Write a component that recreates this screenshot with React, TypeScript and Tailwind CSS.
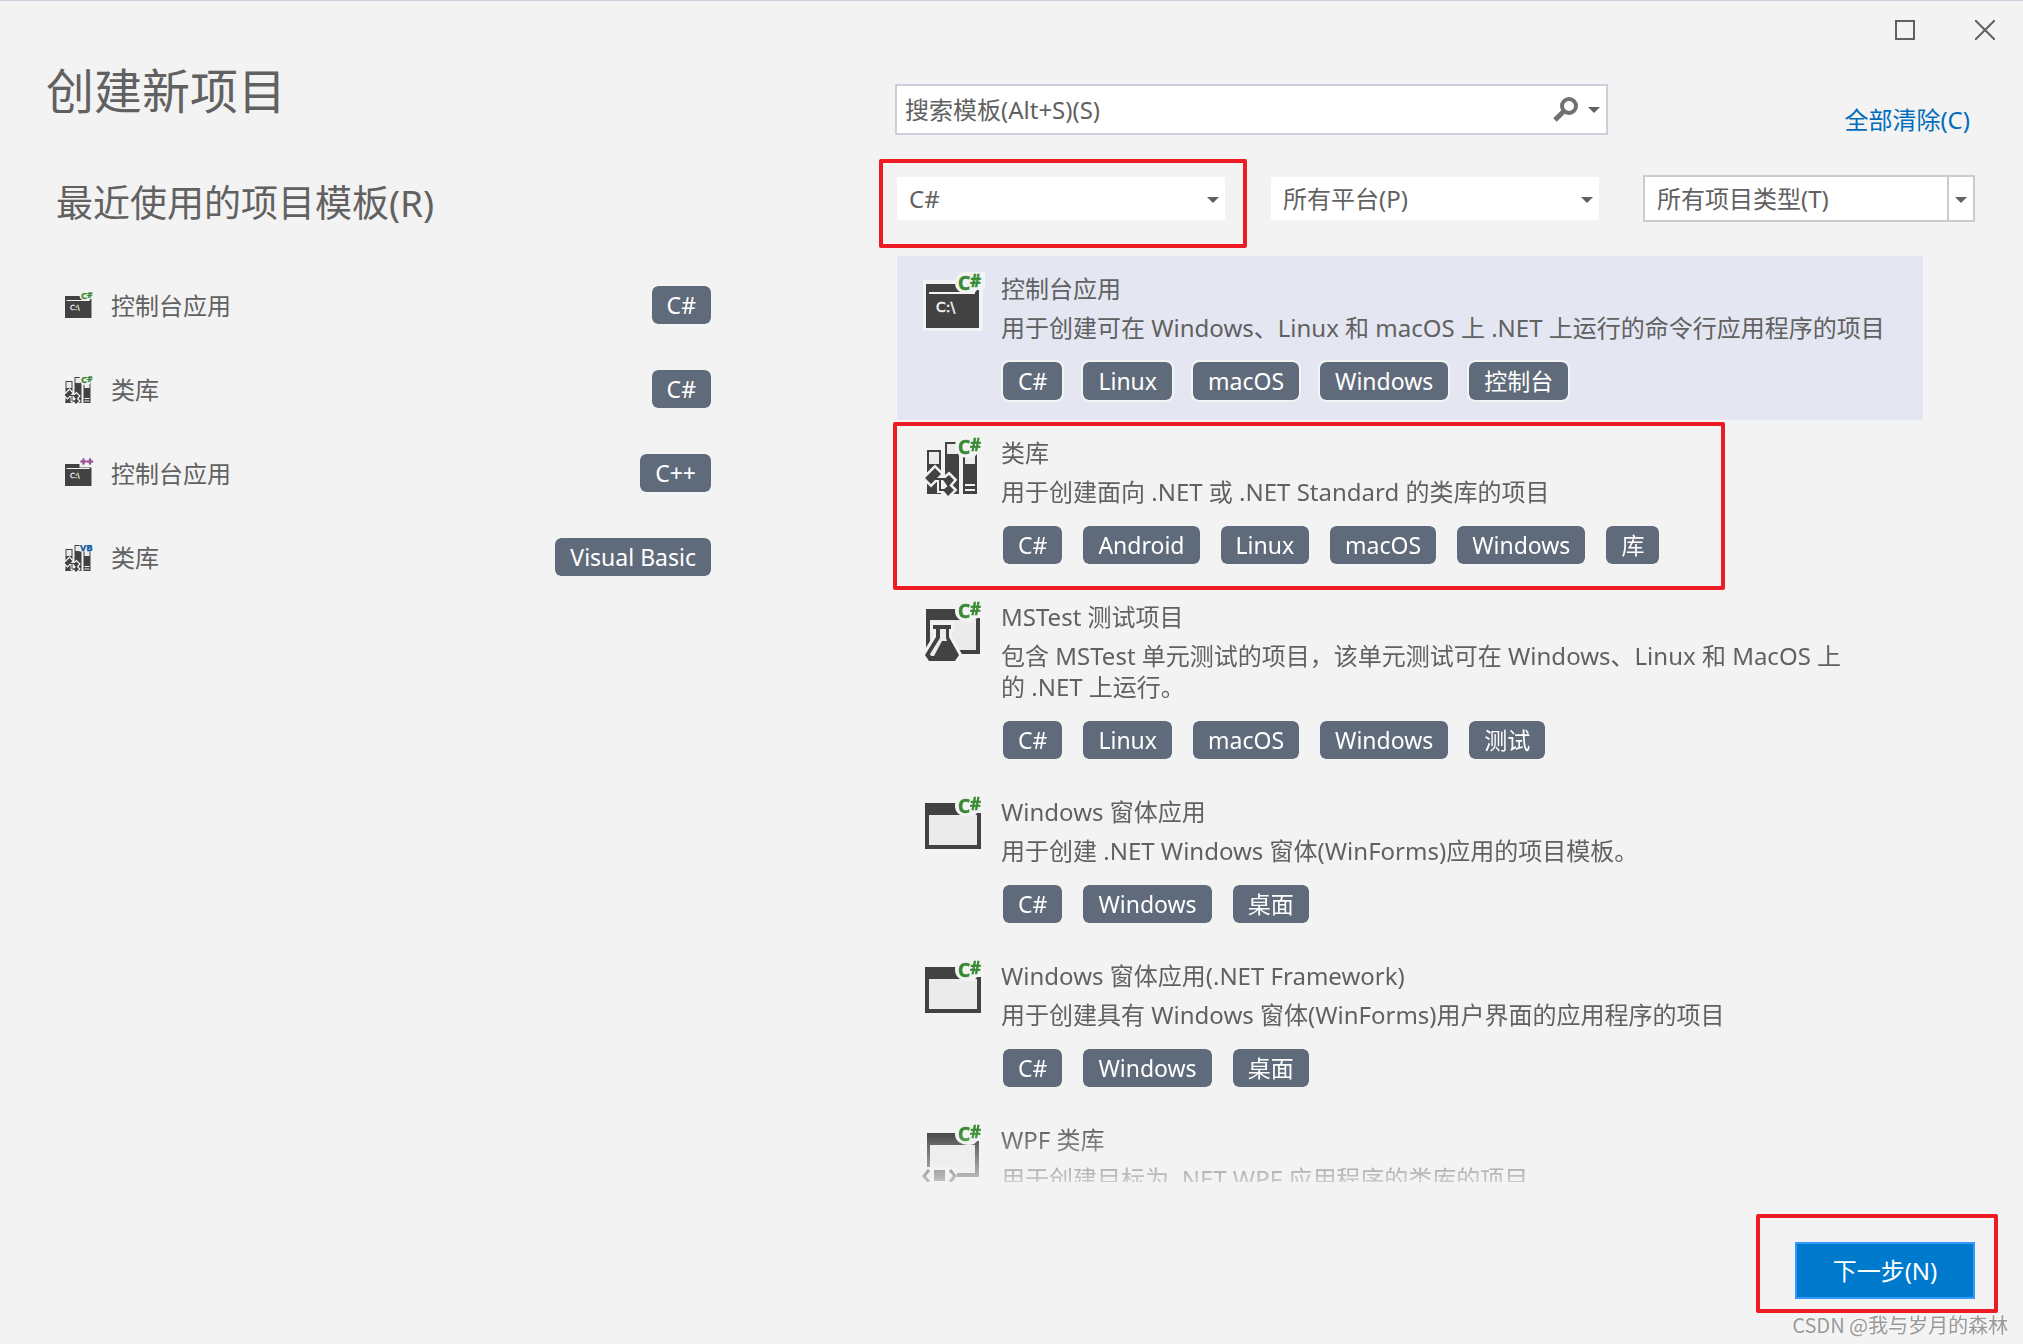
import React, { ReactNode } from "react";
import clsx from "clsx";

type Lang = "C#" | "++" | "VB";

type IconName = "console" | "library" | "test" | "window" | "wpf";

type Template = {
  icon: IconName;
  title: string;
  description: string;
  tags: string[];
  selected?: boolean;
  marked?: boolean;
};

const recentTemplates: { icon: IconName; lang: Lang; title: string; tag: string }[] = [
  { icon: "console", lang: "C#", title: "控制台应用", tag: "C#" },
  { icon: "library", lang: "C#", title: "类库", tag: "C#" },
  { icon: "console", lang: "++", title: "控制台应用", tag: "C++" },
  { icon: "library", lang: "VB", title: "类库", tag: "Visual Basic" },
];

const templates: Template[] = [
  {
    icon: "console",
    title: "控制台应用",
    description: "用于创建可在 Windows、Linux 和 macOS 上 .NET 上运行的命令行应用程序的项目",
    tags: ["C#", "Linux", "macOS", "Windows", "控制台"],
    selected: true,
  },
  {
    icon: "library",
    title: "类库",
    description: "用于创建面向 .NET 或 .NET Standard 的类库的项目",
    tags: ["C#", "Android", "Linux", "macOS", "Windows", "库"],
    marked: true,
  },
  {
    icon: "test",
    title: "MSTest 测试项目",
    description:
      "包含 MSTest 单元测试的项目，该单元测试可在 Windows、Linux 和 MacOS 上\n的 .NET 上运行。",
    tags: ["C#", "Linux", "macOS", "Windows", "测试"],
  },
  {
    icon: "window",
    title: "Windows 窗体应用",
    description: "用于创建 .NET Windows 窗体(WinForms)应用的项目模板。",
    tags: ["C#", "Windows", "桌面"],
  },
  {
    icon: "window",
    title: "Windows 窗体应用(.NET Framework)",
    description: "用于创建具有 Windows 窗体(WinForms)用户界面的应用程序的项目",
    tags: ["C#", "Windows", "桌面"],
  },
  {
    icon: "wpf",
    title: "WPF 类库",
    description: "用于创建目标为 .NET WPF 应用程序的类库的项目",
    tags: [],
  },
];

const shapes: Record<IconName, ReactNode> = {
  console: (
    <>
      <rect x="3" y="10" width="60" height="51" fill="#f3f3f3" />
      <rect x="6" y="14" width="53" height="44" fill="#424242" />
      <rect x="9" y="22" width="46" height="2" fill="#f3f3f3" />
      <text
        x="16"
        y="42"
        fontSize="14"
        fill="#f3f3f3"
        stroke="#f3f3f3"
        strokeWidth="0.5"
        className="font-['DejaVu_Sans',sans-serif]"
      >
        C:\
      </text>
    </>
  ),
  library: (
    <>
      <path d="M7 16h14v44H7zM25 8h14v52H25zM43 16h14v44H43z" fill="#424242" />
      <path d="M9 18h10v12H9zM27 10h10v10H27zM45 18h10v12H45z" fill="#ebebeb" />
      <path d="M45 50h10v2H45zM45 55h10v2H45z" fill="#f3f3f3" />
      <path
        d="M5 44 15 34l6 6-10 10zM23 46l6-5 5 5-6 7zM23 56l6-5 5 5-6 6z"
        fill="#f3f3f3"
        stroke="#f3f3f3"
        strokeWidth="5"
      />
      <path d="M15 45h10M20 45v11h5" fill="none" stroke="#f3f3f3" strokeWidth="6" />
      <path d="M7 56l4 1 4-1v4H7z" fill="#424242" />
      <path d="M15 45h10M20 45v11h5" fill="none" stroke="#424242" strokeWidth="2" />
      <path d="M5 44 15 34l6 6-10 10zM23 46l6-5 5 5-6 7zM23 56l6-5 5 5-6 6z" fill="#424242" />
    </>
  ),
  test: (
    <>
      <path d="M6 11h54v45H6z" fill="#424242" />
      <path d="M10 22h46v30H10z" fill="#ebebeb" />
      <path
        d="M13 27h18v4h-2v8l10 18-4 6H9l-4-6 11-18v-8h-3z"
        fill="#f3f3f3"
        stroke="#f3f3f3"
        strokeWidth="6"
      />
      <path d="M13 27h18v4h-2v8l10 18-4 6H9l-4-6 11-18v-8h-3z" fill="#424242" />
      <path d="M20 31h6v9l1 3h-5l-8 15h-3l-1-2 10-16z" fill="#ebebeb" />
    </>
  ),
  window: (
    <>
      <path d="M5 10h56v46H5z" fill="#424242" />
      <path d="M9 22h48v30H9z" fill="#ebebeb" />
    </>
  ),
  wpf: (
    <>
      <path d="M7 12h52v44H7z" fill="#424242" />
      <path d="M10 24h45v28H10z" fill="#ebebeb" />
      <path d="M0 46h37v18H0z" fill="#f3f3f3" />
      <path d="M14 49h11v11H14z" fill="#424242" />
      <path d="M9 49l-5 6 5 6M30 49l5 6-5 6" fill="none" stroke="#424242" strokeWidth="3" />
    </>
  ),
};

const badges: Record<Lang, { color: string; shape: ReactNode }> = {
  "C#": {
    color: "#388a34",
    shape: (
      <>
        <text x="38" y="20" fontSize="19">C</text>
        <text x="50" y="17" fontSize="17">#</text>
      </>
    ),
  },
  "++": {
    color: "#9b4f96",
    shape: <path d="M41 3h4v4h4v4h-4v4h-4v-4h-4V7h4zM54 3h4v4h4v4h-4v4h-4v-4h-4V7h4z" />,
  },
  VB: {
    color: "#00539c",
    shape: <text x="36" y="19" fontSize="19">VB</text>,
  },
};

const TemplateIcon = ({
  name,
  lang = "C#",
  className,
}: {
  name: IconName;
  lang?: Lang;
  className: string;
}) => (
  <svg viewBox="0 0 64 64" className={clsx("shrink-0 overflow-visible", className)} aria-hidden="true">
    {shapes[name]}
    {/* halo behind the language badge */}
    {lang === "C#" ? (
      <path d="M45 2h20v18h-8c-2 3-5 4-8 4-8 0-14-4-14-11 0-7 4-11 10-11z" fill="#f3f3f3" />
    ) : (
      <path d="M35 2h30v19H35z" fill="#f3f3f3" />
    )}
    <g
      fill={badges[lang].color}
      stroke={badges[lang].color}
      strokeWidth="0.5"
      className="font-['Noto_Sans',sans-serif] font-bold"
    >
      {badges[lang].shape}
    </g>
  </svg>
);

const Tag = ({ children }: { children: ReactNode }) => (
  <span className="rounded-lg border-2 border-[#f3f3f3] bg-[#5f6b7a] bg-clip-padding px-[15px] text-[23px] leading-[38px] whitespace-nowrap text-white">
    {children}
  </span>
);

const Arrow = ({ className }: { className?: string }) => (
  <svg viewBox="0 0 12 6" className={clsx("pointer-events-none h-1.5 w-3", className)} aria-hidden="true">
    <path d="M0 0h12L6 6z" fill="#616161" />
  </svg>
);

// Red frame drawn over the control it surrounds
const Marker = ({ className }: { className: string }) => (
  <div className={clsx("pointer-events-none absolute rounded-xs border-4 border-[#ed1c24]", className)} />
);

const Filter = ({
  label,
  value,
  outlined,
  children,
}: {
  label: string;
  value: string;
  outlined?: boolean;
  children?: ReactNode;
}) => (
  <div className="relative flex-1">
    <select
      aria-label={label}
      className={clsx(
        "block h-[47px] w-full appearance-none border-2 bg-white bg-clip-padding pr-8 pl-3",
        outlined ? "border-[#cccccc]" : "border-transparent"
      )}
    >
      <option>{value}</option>
    </select>
    {outlined && <div className="pointer-events-none absolute inset-y-0 right-[26px] w-0.5 bg-[#cccccc]" />}
    <Arrow className="absolute top-[22px] right-2" />
    {children}
  </div>
);

const TitleBar = () => (
  <header className="flex h-[60px] shrink-0 items-start justify-end gap-[60px] pt-[19px] pr-7">
    <button type="button" aria-label="最大化" className="size-5 border-2 border-[#616161]" />
    <button type="button" aria-label="关闭" className="size-5">
      <svg viewBox="0 0 20 20" className="size-5" aria-hidden="true">
        <path d="M0 0l20 20M20 0L0 20" stroke="#616161" strokeWidth="2" />
      </svg>
    </button>
  </header>
);

const RecentPanel = () => (
  <section className="pt-0.5">
    <h1 className="pl-[46px] text-[48px] leading-[56px]">创建新项目</h1>
    <h2 className="mt-[60px] pl-14 text-[37px] leading-[48px]">最近使用的项目模板(R)</h2>
    <ul className="mt-[57px] flex flex-col gap-[42px] pl-[62px]">
      {recentTemplates.map((item, index) => (
        <li key={index} className="-mr-0.5 flex items-center">
          <TemplateIcon name={item.icon} lang={item.lang} className="size-8" />
          <span className="mr-auto pl-[17px]">{item.title}</span>
          <Tag>{item.tag}</Tag>
        </li>
      ))}
    </ul>
  </section>
);

const TemplateItem = ({ item }: { item: Template }) => (
  <li
    className={clsx(
      "relative mr-[52px] ml-0.5 flex shrink-0 gap-[17px] pl-[23px]",
      item.selected && "bg-[#e4e6f1]"
    )}
  >
    <TemplateIcon name={item.icon} className="mt-3.5 size-16" />
    <div className="pt-[17px] pb-[18px]">
      <h3>{item.title}</h3>
      <p className="mt-2 whitespace-pre-line">{item.description}</p>
      <div className="mt-[17px] flex gap-[17px]">
        {item.tags.map((tag) => (
          <Tag key={tag}>{tag}</Tag>
        ))}
      </div>
    </div>
    {item.marked && <Marker className="top-0.5 right-[198px] -bottom-1.5 -left-1 z-10" />}
  </li>
);

const App = () => {
  return (
    <div className="relative flex h-screen flex-col overflow-hidden border-t border-[#cccedb] bg-[#f3f3f3] font-['Noto_Sans','Noto_Sans_CJK_SC',sans-serif] text-[24px] leading-[31px] text-[#616161]">
      <TitleBar />
      <main className="grid min-h-0 flex-1 grid-cols-[minmax(0,711fr)_minmax(0,1080fr)] gap-[184px] pr-12">
        <RecentPanel />

        <section className="flex min-h-0 flex-col pt-[23px]">
          <div className="flex items-end justify-between">
            <div className="flex h-[51px] w-[66%] items-center border-2 border-[#cccedb] bg-white pr-1.5 pl-2">
              <input
                type="text"
                aria-label="搜索模板"
                placeholder="搜索模板(Alt+S)(S)"
                className="min-w-0 flex-1 outline-none placeholder:text-[#616161] placeholder:opacity-100"
              />
              <button type="button" aria-label="搜索">
                <svg viewBox="0 0 26 26" className="size-[26px]" aria-hidden="true">
                  <circle cx="17" cy="9" r="7" fill="none" stroke="#717171" strokeWidth="4" />
                  <path d="M12 14L3 23" stroke="#717171" strokeWidth="5" />
                </svg>
              </button>
              <button type="button" aria-label="搜索选项" className="ml-2.5">
                <Arrow />
              </button>
            </div>
            <a href="#clear" className="mr-[5px] text-[#006cbe]">
              全部清除(C)
            </a>
          </div>

          <div className="mt-10 flex gap-[42px]">
            <Filter label="语言" value="C#">
              <Marker className="-top-4 -right-5 -bottom-[26px] -left-4" />
            </Filter>
            <Filter label="平台" value="所有平台(P)" />
            <Filter label="项目类型" value="所有项目类型(T)" outlined />
          </div>

          <ul className="mt-[34px] -ml-4 flex min-h-0 flex-1 flex-col overflow-hidden pl-4 [mask-image:linear-gradient(to_top,transparent_-20px,black_52px)]">
            {templates.map((item) => (
              <TemplateItem key={item.title} item={item} />
            ))}
          </ul>
        </section>
      </main>

      <footer className="flex shrink-0 justify-end pt-[60px] pr-12 pb-[45px]">
        <div className="relative">
          <button type="button" className="h-[57px] w-[180px] border-2 border-[#3399ff] bg-[#007acc] text-white">
            下一步(N)
          </button>
          <Marker className="-top-7 -right-[23px] -bottom-3.5 -left-[39px]" />
        </div>
      </footer>

      <div className="absolute right-[15px] bottom-1 font-['Noto_Sans_CJK_SC',sans-serif] text-[20px] leading-[30px] text-[#999999] [text-shadow:-1px_-1px_0_white]">
        CSDN @我与岁月的森林
      </div>
    </div>
  );
};

export default App;
